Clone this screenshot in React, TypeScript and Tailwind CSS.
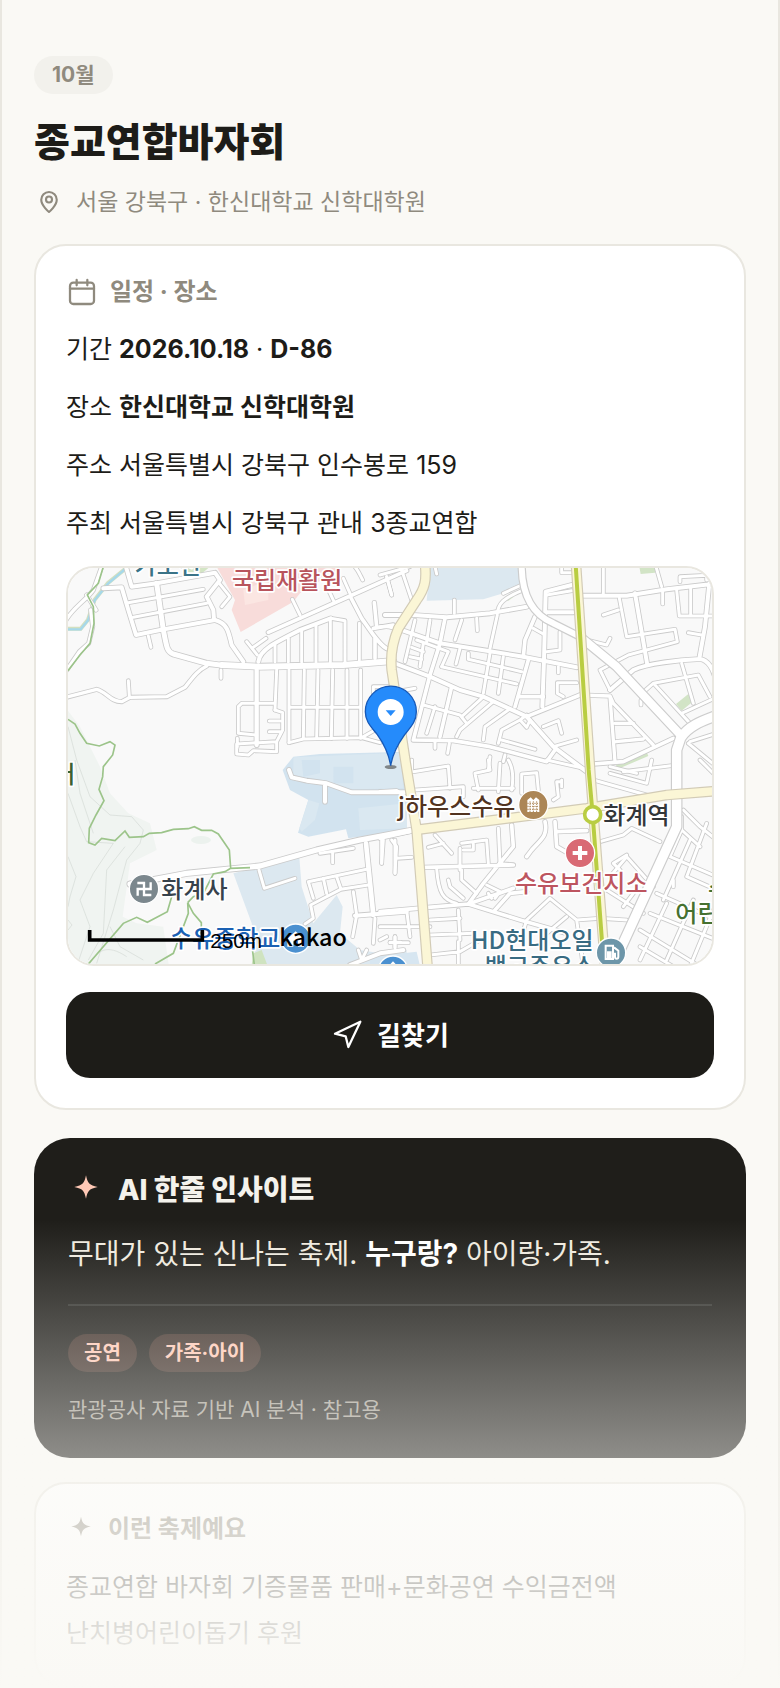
import type { ReactNode } from "react";

type Road = { w: number; d: string };
type Tile = { x: number; y: number; roads: Road[] };

// 지도 도로 데이터 (타일별 좌표)
const tiles: Tile[] = [
  {
    x: -24,
    y: -24,
    roads: [
      { w: 10, d: "M15 185C40 140 80 120 100 90L125 20M80 105L108 150M92 150L98 200L86 250L58 275L20 330" },
      { w: 12, d: "M130 85L185 82L205 150L228 225L300 210L465 180M195 10L215 80L290 70L465 38L480 60L440 110L460 150L462 178" },
      { w: 9, d: "M205 128L430 88M220 172L440 130M265 228L273 262M478 70L510 110L485 140M205 362L208 410M483 330V355" },
      { w: 10, d: "M18 412L110 388C140 395 150 425 185 425L210 412L320 410L375 382C400 350 415 330 440 318" },
      { w: 12, d: "M465 180C500 190 505 210 515 255L550 305M595 305C600 270 640 250 720 210L812 175" },
      { w: 9, d: "M812 175L855 182V305M560 245L592 285M580 262L618 235M697 118L720 165M808 95L822 125M850 55L870 100M880 15C895 30 900 45 908 60M980 50L995 105" },
      { w: 11, d: "M625 217L870 108L1040 32M870 108L905 175C930 210 960 260 985 268M943 128L950 200M945 235V295M940 205L1000 195M975 165H1030" },
      { w: 9, d: "M645 255V305M685 235V305M725 212V305M768 195V305M811 180V305M898 190V300" },
      { w: 9, d: "M650 330L645 450M687 330V548M733 330L730 535M774 330L770 535M818 330L814 535M861 330V535M902 330V535M687 442H902" },
      { w: 9, d: "M687 548L730 537L905 533L960 548M905 533L945 510M940 420V380H985" },
      { w: 9, d: "M640 430H545L535 440V520L590 525M645 450L668 458V510L650 545L530 552V582L565 585L580 572L650 575V545M532 535V560M628 483H660M628 515H660" },
      { w: 13, d: "M590 330V555" },
      { w: 15, d: "M290 70L310 210C320 260 320 275 340 282L440 310L480 315" },
      { w: 18, d: "M485 315L600 320L850 315L1000 303" },
    ],
  },
  {
    x: 936,
    y: -24,
    roads: [
      { w: 9, d: "M0 45L90 20M20 50L35 105M65 30L95 120M165 20L170 42M0 200C30 195 50 210 70 212M0 305H20M50 395L105 385" },
      { w: 12, d: "M15 165H100L200 172L330 160L440 140" },
      { w: 9, d: "M223 120V160M290 175L292 212M352 165L330 265M370 100L425 75M352 160C355 130 370 115 425 92M545 20V38H575M460 205L490 222" },
      { w: 12, d: "M487 440L492 300L497 95L575 75M500 157H580" },
      { w: 9, d: "M500 105L575 92M540 215V270L500 275M535 320V338M590 368H532V400L550 410" },
      { w: 12, d: "M70 212L180 250L320 272L430 290L590 322" },
      { w: 12, d: "M50 312L150 350L240 390L310 410L440 470L520 560L620 635" },
      { w: 11, d: "M195 175L180 250L150 345L100 540M100 540L220 542L330 560L500 605L525 570M215 380L180 530M465 170L435 240L430 290M445 300L405 440M420 410H490M440 470L600 405" },
      { w: 9, d: "M105 180L75 305M150 180L140 245M245 180L225 240M110 240L205 275L185 320M130 250L120 320M95 262L130 275M90 290L125 298M240 265L228 312" },
      { w: 9, d: "M265 280V298L425 335M185 320L410 372M330 280L310 400M370 290L355 400M130 435L240 465L260 490M165 440L140 520M305 415L245 470M340 425L240 510L230 530" },
      { w: 9, d: "M385 450L315 500L310 540M440 465L420 480L365 510L355 550M365 540L465 568M420 480L440 502L450 480M490 500L535 482L545 520M520 560L590 540" },
      { w: 10, d: "M600 405L690 408L700 430L820 555M690 410L705 605M705 490H760M708 545L790 537" },
      { w: 12, d: "M610 107H740L860 88L1010 70M765 100L802 315M690 390L760 330C800 310 900 300 960 297C985 300 1000 330 1005 350M988 70L975 200L958 295" },
      { w: 9, d: "M670 15V100M828 20L845 80M848 90V132M670 165L715 150M718 115L740 230L885 208L892 245L745 285L660 330L690 390" },
      { w: 9, d: "M890 90L898 168H1000M932 85V168M900 65V50L1000 45M925 218L965 225M620 240L680 255L690 235M980 30V60" },
      { w: 9, d: "M780 405L820 370L955 345L990 410M905 310L940 430M825 375L930 490M905 460L1010 412M783 420V435" },
      { w: 11, d: "M640 612L730 605L880 535" },
      { w: 9, d: "M730 635L890 615M930 545L1010 520M925 550L1010 620M165 545V565M208 550L203 580M330 590L325 630M375 585L370 605M95 600V630" },
    ],
  },
  {
    x: -24,
    y: 576,
    roads: [
      { w: 12, d: "M687 30L695 52L740 62L800 70L875 97H1040M795 75V125" },
      { w: 9, d: "M597 330L613 385L705 355M780 280L880 265M818 280V308M965 240V310M1005 240V340" },
      { w: 9, d: "M745 365L920 328M745 365L760 415M790 355L800 400M830 350L842 385M735 492L760 475L752 435L842 388L925 375" },
      { w: 9, d: "M880 395L890 465L878 530M945 475L940 550M1005 530V562M990 547H1022M895 570L905 600L920 570" },
      { w: 12, d: "M885 467L1040 455M870 615L960 580L1030 570" },
      { w: 14, d: "M918 250L940 465" },
      { w: 16, d: "M210 372L380 340L600 318L770 270L900 240L1050 212" },
    ],
  },
  {
    x: 936,
    y: 576,
    roads: [
      { w: 9, d: "M100 35L205 18L210 85M105 90L250 80V110M325 0L330 30L285 40L295 90M360 10L355 95M280 85H400M385 0C400 25 400 60 395 90M425 100V42L470 38L475 90" },
      { w: 9, d: "M545 65H530L535 110L520 120M545 60V80M500 0L610 25M640 60L800 105M690 40L800 70L815 0M690 20L770 40M960 0L1010 50" },
      { w: 10, d: "M0 235L90 215M0 95L50 92L75 110" },
      { w: 9, d: "M10 240L5 310M35 240L50 260L45 340M50 295L95 292M145 262L190 250M165 225L215 280M240 265V330M245 250L320 240L325 310M280 245V270H250M355 205L360 310" },
      { w: 11, d: "M135 322L400 315M395 195L400 260L310 370L265 432M400 315L360 312M495 185C505 230 480 240 455 270L440 290" },
      { w: 9, d: "M245 330V360L290 400M170 325C175 400 190 420 230 430M205 360L210 380L250 415M320 375L360 395L345 415M325 400L335 415" },
      { w: 11, d: "M0 455L145 442L265 432L420 480L560 520M265 432L400 385M345 450L390 400L440 395M525 185L530 260L600 300M530 215L620 212" },
      { w: 9, d: "M0 500L150 500M80 450L90 530M235 450L240 540M150 480L240 475M150 525L280 520M45 530V565M30 548H85M0 540L20 530M150 585L240 575L300 540M235 545V620" },
      { w: 9, d: "M440 480L425 530M510 415L440 480M510 415L590 480L660 475L740 480M560 470L500 520M590 480L610 620M680 390L790 460M660 245L730 225L755 205L840 245M690 350L740 290L820 380" },
      { w: 9, d: "M720 330L700 310L740 285M760 400L730 440M910 150L960 200L1010 240M905 170V210L870 290L1010 350M905 210L960 260M980 190L920 350L1010 390M930 240L850 420" },
      { w: 9, d: "M830 400L1010 480M880 380V360M810 460L1010 540M780 510L960 620M860 430L780 600M940 420L860 600M1000 450L930 620M780 560L880 620" },
    ],
  },
];

const roadEdge = "#cacaca";

function MapLabel({ x, y, color, children }: { x: number; y: number; color: string; children: ReactNode }) {
  return (
    <text
      x={x}
      y={y}
      fill={color}
      stroke="#fff"
      strokeWidth={10}
      strokeLinejoin="round"
      paintOrder="stroke"
      className="font-['Noto_Sans_CJK_KR',sans-serif] text-[72px] font-medium"
    >
      {children}
    </text>
  );
}

function FestivalMap() {
  return (
    <svg
      viewBox="0 0 1932 1188"
      preserveAspectRatio="xMidYMid slice"
      className="block h-full w-full"
      role="img"
      aria-label="지도"
    >
      <rect width="1932" height="1188" fill="#f9f9f9" />

      {/* 녹지 */}
      <g transform="translate(-24 -24)">
        <path d="M0 420L60 500L120 620L150 700L205 760L270 790L290 870L210 910L188 1070L230 1090L310 1100L330 1240H0Z" fill="#f0f4f1" />
        <path d="M385 20H450L420 45L380 48Z" fill="#d3e5c5" />
        <path d="M470 20H850L720 100L700 125L542 216L515 150L525 120Z" fill="#f8dcda" />
        <path d="M550 90L625 60V120L555 135Z" fill="#fbe6e2" />
        <ellipse cx="423" cy="840" rx="30" ry="12" fill="#ecf2ee" />
      </g>
      {/* 학교 부지 */}
      <g transform="translate(-24 576)">
        <path d="M690 90L668 30L700 -10L780 -18L1040 -25V210L865 235L858 208L745 230L714 218L745 120Z" fill="#d2e3ef" />
        <path d="M700 -8L1020 -22L1030 85L880 88L800 62L700 45Z" fill="#dae8f1" />
        <path d="M725 0H780V40L730 50ZM820 20H880V70H820Z" fill="#d2e3ef" />
        <path d="M895 145L1040 130V205L900 210ZM745 120L778 130L765 180L725 215L718 205Z" fill="#dae8f1" />
        <path d="M520 340L718 292L725 380L760 490L830 405L848 440L840 520L900 570L960 580L1040 570V630H590L575 490Z" fill="#dce8f0" />
        <path d="M580 580L605 570L622 615H575Z" fill="#cfe3c0" />
      </g>
      <g transform="translate(936 -24)">
        <path d="M150 20H415L420 75L370 100L310 118L140 122Z" fill="#dce8f0" />
        <path d="M778 20H825V38L782 42ZM888 432L925 402L938 425L905 452ZM708 615L800 575L805 588L712 628ZM375 120L405 108L385 122Z" fill="#d2e4c6" />
        <path d="M20 1185L110 1175L125 1240H-30V1190Z" fill="#d7e6f1" />
      </g>

      {/* 등고선 */}
      <g transform="translate(-24 576)" fill="none" stroke="#d3dad4" strokeWidth={2}>
        <path d="M24 -100L50 0L90 110L150 165L215 170L250 210L240 250L200 300L160 450L110 610" />
        <path d="M24 100L60 200L80 245L160 250L100 340L60 420L90 500L50 620" />
        <path d="M24 290L48 350L30 410L24 440M195 260L140 330L130 520L85 600M45 0L60 100L100 220M24 480L36 495L24 510" />
        <path d="M85 620C110 570 140 550 200 590M150 500L180 560L250 600" />
      </g>

      {/* 하천 */}
      <path d="M-10 182H38L60 155L80 95L120 45L175 0" fill="none" stroke="#d3e0c0" strokeWidth={12} />
      <path d="M-10 184H38L60 157L80 97L120 47L175 0" fill="none" stroke="#a6d8ea" strokeWidth={7} />

      {/* 도로 */}
      {tiles.map((t, i) => (
        <g key={i} transform={`translate(${t.x} ${t.y})`} fill="none" stroke={roadEdge} strokeLinecap="round" strokeLinejoin="round">
          {t.roads.map((r) => (
            <path key={r.d} d={r.d} strokeWidth={r.w + 5} />
          ))}
        </g>
      ))}
      {tiles.map((t, i) => (
        <g key={i} transform={`translate(${t.x} ${t.y})`} fill="none" stroke="#fff" strokeLinecap="round" strokeLinejoin="round">
          {t.roads.map((r) => (
            <path key={r.d} d={r.d} strokeWidth={r.w} />
          ))}
        </g>
      ))}

      {/* 간선도로 */}
      <g fill="none" strokeLinejoin="round">
        {[
          { c: "#cdcdcd", e: 7 },
          { c: "#fff", e: 0 },
        ].map(({ c, e }) => (
          <g key={c} stroke={c}>
            <path d="M1361 -10C1361 70 1386 136 1456 166L1536 206" strokeWidth={18 + e} />
            <path d="M1536 206L1646 296L1841 505" strokeWidth={24 + e} />
            <path d="M1940 445C1900 460 1860 475 1838 510L1826 546V776L1656 1146L1620 1200" strokeWidth={28 + e} />
          </g>
        ))}
        {[
          { c: "#d2cbb6", e: 7 },
          { c: "#fbf6d6", e: 0 },
        ].map(({ c, e }) => (
          <g key={c} stroke={c} strokeWidth={25 + e}>
            <path d="M1050 785L1266 758L1556 721L1796 681L1946 669" />
            <path d="M1071 -10C1076 36 1071 61 1046 96L991 181C976 216 966 256 971 306L1014 590L1046 786L1079 1200" />
            <path d="M1524 -10L1568 630L1612 1200" />
          </g>
        ))}
        <path d="M1523 -10L1562 606L1574 740L1602 1120" stroke="#b9cd42" strokeWidth={12} />
      </g>

      {/* 산책로 */}
      <g transform="translate(-24 -24)" fill="none" stroke="#9cc48a" strokeWidth={5}>
        <path d="M130 20L115 70L82 105L100 140L102 190L90 250L60 285L24 332" />
        <path d="M24 478L45 492L60 520L80 550L118 558L150 545L165 555L158 585L130 620L128 650L117 688L132 722L108 765L88 805L86 848L105 855L125 835L165 842L195 813L208 832L250 830L268 820L305 818L340 808L385 806L403 800L425 811L455 811L475 822L508 870L512 925L570 923M512 925L495 935L460 942L430 1000L400 1010L383 1028" />
        <path d="M335 1010L322 1055L262 1087L230 1072L190 1090L85 1212M383 1028L385 1060L340 1180L285 1212M383 1028L400 1060L424 1088V1130M575 1150L583 1215" />
      </g>

      {/* 지도 라벨 */}
      <MapLabel x={200} y={18} color="#3a7387">가오천</MapLabel>
      <MapLabel x={492} y={62} color="#b8545c">국립재활원</MapLabel>
      <MapLabel x={-44} y={644} color="#3b6130">터</MapLabel>
      <MapLabel x={280} y={990} color="#37424c">화계사</MapLabel>
      <MapLabel x={306} y={1138} color="#1b61b3">수유중학교</MapLabel>
      <MapLabel x={990} y={742} color="#513320">j하우스수유</MapLabel>
      <MapLabel x={1606} y={768} color="#333639">화계역</MapLabel>
      <MapLabel x={1341} y={973} color="#bd5560">수유보건지소</MapLabel>
      <MapLabel x={1822} y={1061} color="#467130">어린이</MapLabel>
      <MapLabel x={1920} y={990} color="#467130">수</MapLabel>
      <MapLabel x={1208} y={1144} color="#386b82">HD현대오일</MapLabel>
      <MapLabel x={1250} y={1221} color="#386b82">백고주유소</MapLabel>

      {/* 지도 아이콘 */}
      <g stroke="#fff" strokeWidth={4}>
        <circle cx="228" cy="963" r="44" fill="#7b878d" />
        <circle cx="1396" cy="711" r="44" fill="#ac8656" />
        <circle cx="1536" cy="855" r="44" fill="#d96a74" />
        <circle cx="1629" cy="1154" r="44" fill="#6d96a9" />
        <circle cx="683" cy="1112" r="44" fill="#4a90d0" />
        <circle cx="975" cy="1208" r="44" fill="#4a90d0" />
      </g>
      <path d="M208 945H228V981H250M248 943V963H209V983" fill="none" stroke="#fff" strokeWidth={7} />
      <path d="M1530 834h12v15h16v12h-16v15h-12v-15h-16v-12h16z" fill="#fff" />
      <path d="M1378 696L1388 688L1396 696L1404 688L1414 696V732H1378Z" fill="#fff" />
      <path d="M1386 700V732M1396 700V732M1406 700V732M1378 706H1414M1378 715H1414M1378 724H1414" stroke="#ac8656" strokeWidth={3} strokeDasharray="4 3" />
      <path d="M1613 1133h22v40h-22zM1638 1138l13 10v18c0 8-10 8-10 0v-12" fill="none" stroke="#fff" strokeWidth={6} />
      <path d="M1617 1150h14v20h-14z" fill="#fff" />
      <path d="M658 1112L683 1090L708 1112V1136H690V1118H676V1136H658ZM948 1208L975 1180L1002 1208Z" fill="#fff" />
      <circle cx="1574" cy="740" r="24" fill="#fff" stroke="#b9cd42" strokeWidth={11} />

      {/* 축제 위치 핀 */}
      <ellipse cx="968" cy="597" rx="18" ry="6" fill="#444" opacity={0.6} />
      <path
        d="M968 593C962 555 948 528 928 500C908 475 892 460 892 431A76 76 0 0 1 1045 431C1045 460 1030 475 1010 500C990 528 974 555 968 593Z"
        fill="#258bfb"
        stroke="#1659b8"
        strokeWidth={4}
      />
      <circle cx="968" cy="432" r="39" fill="#fff" />
      <path d="M953 427H983L968 444Z" fill="#258bfb" />

      {/* 축척, 로고 */}
      <path d="M65 1086V1116H403V1086" fill="none" stroke="#000" strokeWidth={11} />
      <text x={427} y={1140} className="font-['Liberation_Sans',sans-serif] text-[62px]">250m</text>
      <text x={634} y={1134} className="font-['Noto_Sans_CJK_KR',sans-serif] text-[70px] font-medium">kakao</text>
    </svg>
  );
}

function Sparkle({ className }: { className: string }) {
  return (
    <svg viewBox="0 0 24 24" fill="currentColor" className={className} aria-hidden="true">
      <path d="M12 2.200c1.100 5.400 2.200 6.600 7.800 7.800-5.600 1.200-6.700 2.400-7.800 7.800-1.100-5.400-2.200-6.600-7.800-7.800 5.600-1.200 6.700-2.400 7.800-7.800z" />
    </svg>
  );
}

const details = [
  { label: "기간", value: "2026.10.18", extra: "D-86", bold: true },
  { label: "장소", value: "한신대학교 신학대학원", bold: true },
  { label: "주소", value: "서울특별시 강북구 인수봉로 159", bold: false },
  { label: "주최", value: "서울특별시 강북구 관내 3종교연합", bold: false },
];

const tags = ["공연", "가족·아이"];

export default function App() {
  return (
    <main className="relative min-h-screen border-x-2 border-[#e9e7e0] bg-[#faf9f5] px-8 pt-14 font-[Inter,'Noto_Sans_CJK_KR',sans-serif] text-[#1d1c18]">
      <header>
        <span className="flex h-[38px] w-fit items-center rounded-full bg-[#f2f1ec] px-[18px] text-[21px] font-bold text-[#8f8a7e]">
          10월
        </span>
        <h1 className="mt-[18px] text-[39px] leading-[60px] font-extrabold">종교연합바자회</h1>
        <p className="mt-3 flex items-center gap-3 text-[23px] leading-9 text-[#8f8a7e]">
          <svg viewBox="0 0 24 24" fill="none" stroke="currentColor" strokeWidth="1.7" strokeLinejoin="round" className="size-[30px]" aria-hidden="true">
            <path d="M12 20C12 20 5.800 15 5.800 10.200a6.200 6.200 0 0 1 12.400 0C18.200 15 12 20 12 20Z" />
            <circle cx="12" cy="10" r="2.400" />
          </svg>
          서울 강북구 · 한신대학교 신학대학원
        </p>
      </header>

      {/* 일정 및 장소 */}
      <section className="mt-6 rounded-[32px] border-2 border-[#e9e7e0] bg-white p-[30px]">
        <h2 className="flex h-8 items-center gap-3 text-[24px] font-bold text-[#8f8a7e]">
          <svg viewBox="0 0 24 24" fill="none" stroke="currentColor" strokeWidth="1.7" strokeLinecap="round" className="size-8" aria-hidden="true">
            <rect x="3" y="5" width="18" height="16" rx="2.500" />
            <path d="M3 9.500h18M8 3v4M16 3v4" />
          </svg>
          일정 · 장소
        </h2>
        <div className="mt-5 flex flex-col gap-4 text-[25px] leading-[42px]">
          {details.map((item) => (
            <p key={item.label}>
              {item.label}{" "}
              {item.bold ? <b className="font-bold">{item.value}</b> : item.value}
              {item.extra && (
                <>
                  {" · "}
                  <b className="font-bold">{item.extra}</b>
                </>
              )}
            </p>
          ))}
        </div>
        <div className="mt-[22px] h-[400px] overflow-hidden rounded-[28px] border-2 border-[#e9e7e0]">
          <FestivalMap />
        </div>
        <button
          type="button"
          className="mt-[26px] flex h-[86px] w-full items-center justify-center gap-[14px] rounded-[24px] bg-[#1d1c18] text-[26px] font-bold text-white"
        >
          <svg viewBox="0 0 24 24" fill="none" stroke="currentColor" strokeWidth="1.700" strokeLinejoin="round" className="size-8" aria-hidden="true">
            <path d="M3 11L22 2L13 21L11 13Z" />
          </svg>
          길찾기
        </button>
      </section>

      {/* AI 인사이트 */}
      <section className="mt-7 rounded-[36px] bg-[#1f1e1a] p-[34px] pb-8">
        <h2 className="flex h-9 items-center gap-[14px] text-[28px] font-extrabold text-[#f4f2ec]">
          <Sparkle className="size-9 text-[#ffc9b6]" />
          AI 한줄 인사이트
        </h2>
        <p className="mt-[22px] text-[28px] leading-[48px] text-[#efeadf]">
          무대가 있는 신나는 축제. <b className="font-bold text-white">누구랑?</b> 아이랑·가족.
        </p>
        <div className="mt-[26px] flex gap-3 border-t-2 border-white/10 pt-7">
          {tags.map((tag) => (
            <span
              key={tag}
              className="flex h-[38px] items-center rounded-full bg-[#ff9f85]/15 px-4 text-[20px] font-bold text-[#ffc9b6]"
            >
              {tag}
            </span>
          ))}
        </div>
        <p className="mt-[22px] text-[21px] leading-8 text-[#a39f94]">관광공사 자료 기반 AI 분석 · 참고용</p>
      </section>

      {/* 축제 소개 */}
      <section className="mt-6 rounded-[32px] border-2 border-[#e9e7e0] bg-white p-[30px]">
        <h2 className="flex h-[30px] items-center gap-3 text-[24px] font-bold text-[#8f8a7e]">
          <Sparkle className="size-[30px]" />
          이런 축제예요
        </h2>
        <p className="mt-5 text-[25px] leading-[46px]">
          종교연합 바자회 기증물품 판매+문화공연 수익금전액
          <br />
          난치병어린이돕기 후원
        </p>
      </section>

      {/* 하단 페이드 */}
      <div className="pointer-events-none absolute -inset-x-0.5 bottom-0 h-[468px] bg-linear-to-b from-[#faf9f5]/0 to-[#faf9f5]" />
    </main>
  );
}
